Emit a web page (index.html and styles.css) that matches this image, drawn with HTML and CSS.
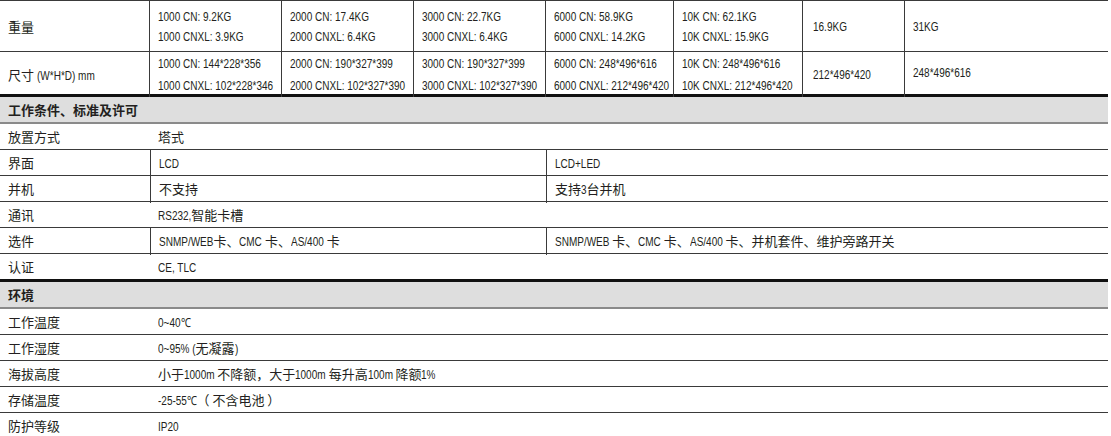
FILE: index.html
```html
<!DOCTYPE html>
<html lang="zh">
<head>
<meta charset="utf-8">
<link rel="stylesheet" href="styles.css">
</head>
<body>
<div class="sheet">
  <div class="spec spec-top">
    <div class="cell label">重量</div>
    <div class="cell"><span class="n">1000 CN: 9.2KG</span><span class="n">1000 CNXL: 3.9KG</span></div>
    <div class="cell"><span class="n">2000 CN: 17.4KG</span><span class="n">2000 CNXL: 6.4KG</span></div>
    <div class="cell"><span class="n">3000 CN: 22.7KG</span><span class="n">3000 CNXL: 6.4KG</span></div>
    <div class="cell"><span class="n">6000 CN: 58.9KG</span><span class="n">6000 CNXL: 14.2KG</span></div>
    <div class="cell"><span class="n">10K CN: 62.1KG</span><span class="n">10K CNXL: 15.9KG</span></div>
    <div class="cell single"><span class="n">16.9KG</span></div>
    <div class="cell single last"><span class="n">31KG</span></div>
  </div>
  <div class="spec spec-dim">
    <div class="cell label"><span>尺寸 <span class="n">(W*H*D) mm</span></span></div>
    <div class="cell"><span class="n">1000 CN: 144*228*356</span><span class="n">1000 CNXL: 102*228*346</span></div>
    <div class="cell"><span class="n">2000 CN: 190*327*399</span><span class="n">2000 CNXL: 102*327*390</span></div>
    <div class="cell"><span class="n">3000 CN: 190*327*399</span><span class="n">3000 CNXL: 102*327*390</span></div>
    <div class="cell"><span class="n">6000 CN: 248*496*616</span><span class="n">6000 CNXL: 212*496*420</span></div>
    <div class="cell"><span class="n">10K CN: 248*496*616</span><span class="n">10K CNXL: 212*496*420</span></div>
    <div class="cell single"><span class="n">212*496*420</span></div>
    <div class="cell single last up"><span class="n">248*496*616</span></div>
  </div>

  <div class="section-head">工作条件、标准及许可</div>
  <div class="row"><div class="k">放置方式</div><div class="v">塔式</div></div>
  <div class="row split"><div class="k">界面</div><div class="v"><span class="n">LCD</span></div><div class="v"><span class="n">LCD+LED</span></div></div>
  <div class="row split"><div class="k">并机</div><div class="v">不支持</div><div class="v">支持<span class="n">3</span>台并机</div></div>
  <div class="row"><div class="k">通讯</div><div class="v"><span class="n">RS232,</span>智能卡槽</div></div>
  <div class="row split"><div class="k">选件</div><div class="v"><span class="n">SNMP/WEB</span>卡、<span class="n">CMC </span>卡、<span class="n">AS/400 </span>卡</div><div class="v"><span class="n">SNMP/WEB </span>卡、<span class="n">CMC </span>卡、<span class="n">AS/400 </span>卡、并机套件、维护旁路开关</div></div>
  <div class="row end"><div class="k">认证</div><div class="v"><span class="n">CE, TLC</span></div></div>

  <div class="section-head">环境</div>
  <div class="row"><div class="k">工作温度</div><div class="v"><span class="n">0~40℃</span></div></div>
  <div class="row"><div class="k">工作湿度</div><div class="v"><span class="n">0~95% (</span>无凝露<span class="n">)</span></div></div>
  <div class="row"><div class="k">海拔高度</div><div class="v">小于<span class="n">1000m </span>不降额，大于<span class="n">1000m </span>每升高<span class="n">100m </span>降额<span class="n">1%</span></div></div>
  <div class="row"><div class="k">存储温度</div><div class="v"><span class="n">-25-55℃</span>（ 不含电池 ）</div></div>
  <div class="row nob"><div class="k">防护等级</div><div class="v"><span class="n">IP20</span></div></div>
</div>
<script src="app.js"></script>
</body>
</html>
```

FILE: styles.css
```css
html, body {
  margin: 0;
  padding: 0;
  background: #ffffff;
}

body {
  font-family: "Noto Sans CJK SC", sans-serif;
  color: #231f20;
  font-size: 13px;
}

.sheet {
  width: 1108px;
}

.n {
  display: inline-block;
  font-family: "Liberation Sans", Arial, sans-serif;
  font-size: 12.5px;
  transform: scaleX(0.8);
  transform-origin: left center;
  white-space: pre;
}

.spec {
  display: grid;
  grid-template-columns: 150px 132px 132px 132px 128px 129px 102px 203px;
  border-bottom: 1px solid #3a3a3a;
}

.spec-top {
  border-top: 1px solid #3a3a3a;
  height: 50px;
}

.spec-dim {
  height: 42px;
  border-bottom: 3px solid #111111;
}

.cell {
  display: flex;
  flex-direction: column;
  justify-content: center;
  align-items: flex-start;
  padding-left: 8px;
  border-right: 1px solid #3a3a3a;
  line-height: 20px;
  white-space: nowrap;
}

.spec-top .cell {
  padding-top: 2px;
}

.spec-dim .cell {
  line-height: 22px;
  padding-top: 1px;
}

.cell.single {
  padding-left: 10px;
}

.cell.last {
  border-right: none;
  padding-left: 8px;
}

.cell.up {
  justify-content: flex-start;
  padding-top: 10px;
}

.section-head {
  background: #dedede;
  height: 25px;
  line-height: 25px;
  padding-left: 8px;
  font-weight: 700;
  font-size: 13px;
  border-bottom: 2px solid #8a8a8a;
}

.row {
  display: grid;
  grid-template-columns: 150px 1fr;
  height: 25px;
  border-bottom: 1px solid #3a3a3a;
}

.row.split {
  grid-template-columns: 150px 396px 1fr;
}

.row.end {
  border-bottom: 3px solid #111111;
}

.row.nob {
  border-bottom: none;
}

.k {
  padding-left: 8px;
  line-height: 26px;
  white-space: nowrap;
}

.v {
  padding-left: 8px;
  line-height: 26px;
  white-space: nowrap;
}

.row.split .v {
  border-left: 1px solid #3a3a3a;
}
```

FILE: app.js
```js
document.querySelectorAll('.n').forEach(function (el) {
  var w = el.offsetWidth;
  el.style.marginRight = (-w * 0.2).toFixed(2) + 'px';
});
```
